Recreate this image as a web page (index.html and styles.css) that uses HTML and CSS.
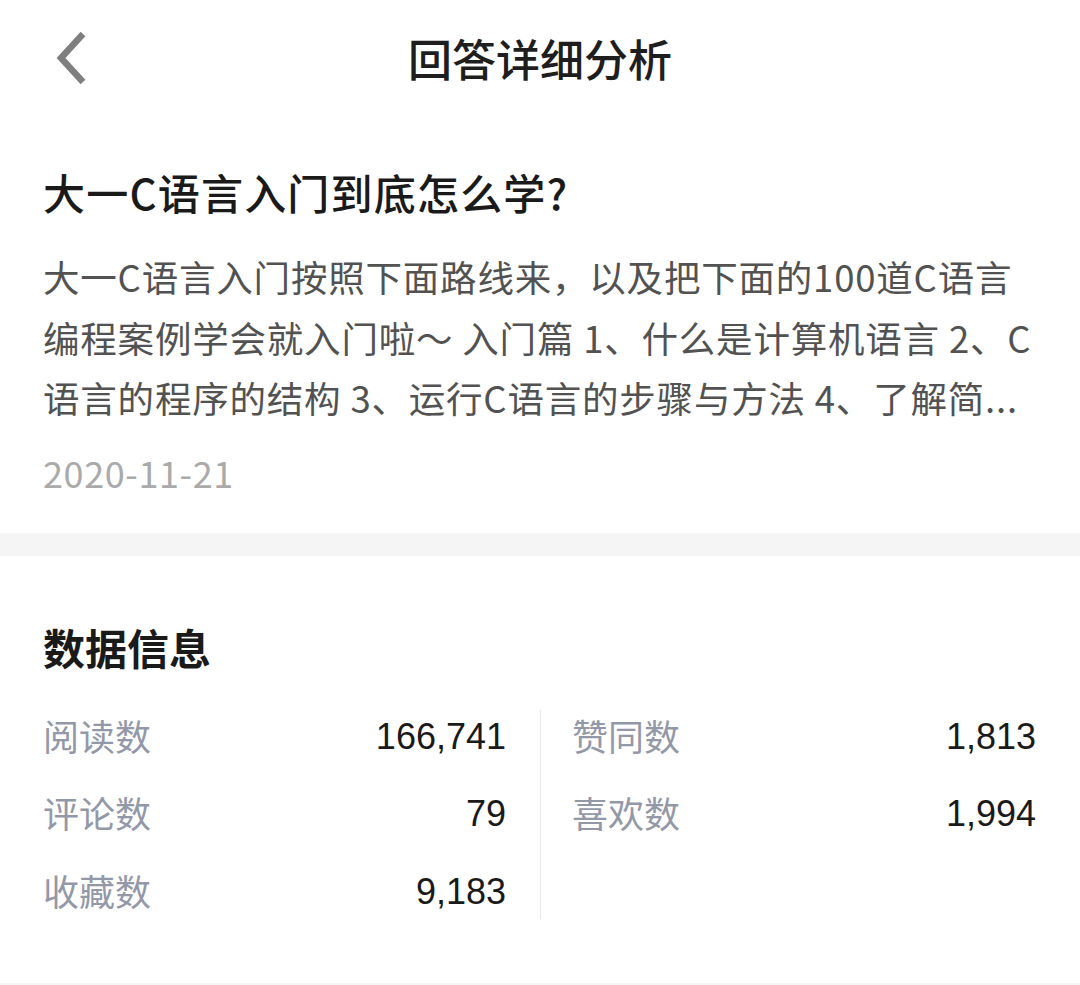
FILE: index.html
```html
<!DOCTYPE html>
<html lang="zh-CN">
<head>
<meta charset="utf-8">
<title>回答详细分析</title>
<link rel="stylesheet" href="styles.css">
</head>
<body>
<div class="page">
  <header class="navbar">
    <div class="nav-left">
      <svg class="back" width="40" height="56" viewBox="0 0 40 56" aria-hidden="true">
        <polyline points="30,4 8,28 30,52" fill="none" stroke="#7f7f7f" stroke-width="6.5" stroke-linejoin="miter"/>
      </svg>
    </div>
    <h1 class="nav-title">回答详细分析</h1>
    <div class="nav-right"></div>
  </header>

  <section class="answer">
    <h2 class="q-title">大一C语言入门到底怎么学?</h2>
    <p class="q-body">大一C语言入门按照下面路线来，以及把下面的100道C语言编程案例学会就入门啦～ 入门篇 1、什么是计算机语言 2、C语言的程序的结构 3、运行C语言的步骤与方法 4、了解简...</p>
    <div class="q-date">2020-11-21</div>
  </section>

  <div class="band"></div>

  <section class="stats">
    <h2 class="stats-title">数据信息</h2>
    <div class="stats-grid">
      <div class="col col-left">
        <div class="row"><span class="label">阅读数</span><span class="num">166,741</span></div>
        <div class="row"><span class="label">评论数</span><span class="num">79</span></div>
        <div class="row"><span class="label">收藏数</span><span class="num">9,183</span></div>
      </div>
      <div class="col col-right">
        <div class="row"><span class="label">赞同数</span><span class="num">1,813</span></div>
        <div class="row"><span class="label">喜欢数</span><span class="num">1,994</span></div>
      </div>
    </div>
  </section>

  <div class="band band-bottom"></div>
</div>
</body>
</html>
```

FILE: styles.css
```css
* { box-sizing: border-box; }
html, body { margin: 0; padding: 0; background: #ffffff; }
body {
  font-family: "Noto Sans CJK SC", "Noto Sans", "Liberation Sans", sans-serif;
  color: #1a1a1a;
  width: 1080px;
  overflow: hidden;
}
.page { width: 1080px; }

.navbar {
  height: 116px;
  display: grid;
  grid-template-columns: 1fr auto 1fr;
  align-items: center;
  padding: 0 43px;
}
.nav-left { display: flex; align-items: center; padding-left: 10px; }
.back { display: block; }
.nav-title {
  margin: 0;
  font-size: 44px;
  font-weight: 500;
  line-height: 116px;
  color: #1e1e1e;
}

.answer { padding: 46px 40px 39px 43px; }
.q-title {
  margin: 0;
  font-size: 42px;
  font-weight: 500;
  letter-spacing: 1.2px;
  line-height: 60px;
  color: #1a1a1a;
}
.q-body {
  margin: 25px 0 0;
  font-size: 36.5px;
  letter-spacing: 0.8px;
  line-height: 60.5px;
  color: #525252;
}
.q-date {
  margin-top: 21px;
  font-size: 36px;
  letter-spacing: 0.6px;
  line-height: 44px;
  color: #aaaaaa;
}

.band { height: 23px; background: #f5f5f5; }
.band-bottom { height: 10px; }

.stats { padding: 61px 44px 64px 43px; }
.stats-title {
  margin: 0;
  font-size: 42px;
  font-weight: 700;
  line-height: 60px;
  color: #1a1a1a;
}
.stats-grid {
  margin-top: 33px;
  display: grid;
  grid-template-columns: 498px 1fr;
}
.col {
  display: flex;
  flex-direction: column;
  gap: 23.5px;
}
.col-left { border-right: 1px solid #e8e8e8; padding-right: 34px; }
.col-right { padding-left: 31px; }
.row {
  height: 54px;
  display: flex;
  justify-content: space-between;
  align-items: center;
}
.label {
  font-size: 36px;
  color: #9398a8;
  line-height: 54px;
  margin-top: -4px;
}
.num {
  font-family: "Liberation Sans", "Noto Sans", sans-serif;
  font-size: 36px;
  color: #1a1a1a;
  line-height: 54px;
}
```
